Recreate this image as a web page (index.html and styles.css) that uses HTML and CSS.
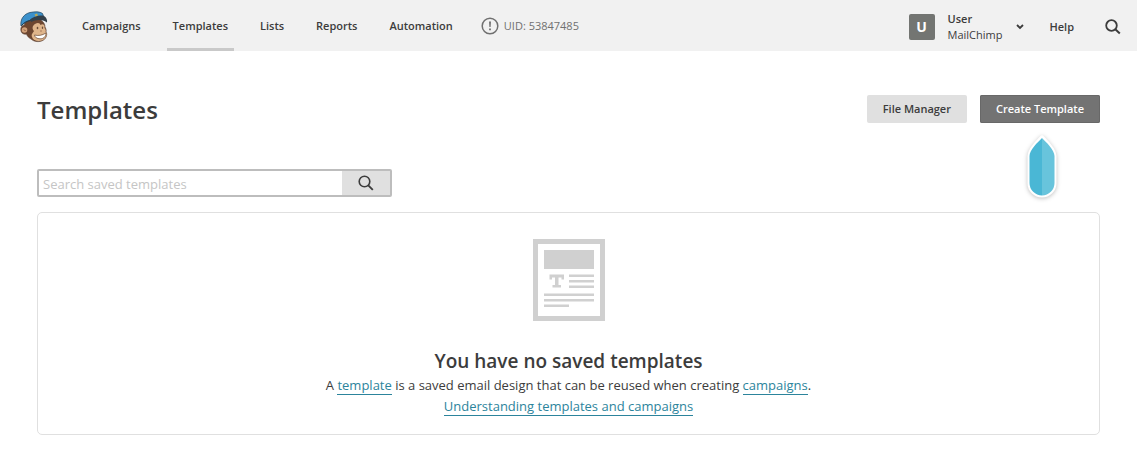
FILE: index.html
```html
<!DOCTYPE html>
<html lang="en">
<head>
<meta charset="utf-8">
<meta name="viewport" content="width=device-width, initial-scale=1">
<title>Templates</title>
<link rel="stylesheet" href="styles.css">
</head>
<body>
<header class="topbar">
  <a class="logo" href="#" aria-label="MailChimp home">
    <svg width="30" height="34" viewBox="0 0 30 34" aria-hidden="true">
      <path d="M5 11C7 8 13 7 18 8C22 9 25 12 25 16C26 18 26.500 19 26 21C27.500 23 26.500 27 23.500 29C20 31.500 14 31 11 28C9 27 7 25 6.500 23C3 24 0 21 1 17C1.500 15 3 14 4.500 14Z" fill="#6d4630" stroke="#5a4030" stroke-width=".6"/>
      <path d="M15 13C18 11 20 12 20.500 14C23 12 25 14 24.500 17C26 19 26 20 25.500 21C28 23 26 27 23 29C19 31 13 30 12 26C11 23 13 22 14 20C12 18 12 15 15 13Z" fill="#dfb58b"/>
      <circle cx="4.500" cy="19" r="2.800" fill="#d2a179"/>
      <path d="M4 18.500L5.500 20" stroke="#805338"/>
      <path d="M14.500 24C18 25 22 24.500 26 22C26 26 23 28 20 27.800C17 27.800 15 26.500 14.500 24Z" fill="#fff" stroke="#684631" stroke-width=".7"/>
      <ellipse cx="17.500" cy="17" rx=".8" ry="1.300" fill="#6c4d38"/>
      <ellipse cx="22.500" cy="16.800" rx=".7" ry="1.200" fill="#6c4d38"/>
      <path d="M20 20L22 20" stroke="#9b6f50" stroke-width=".8"/>
      <path d="M1 15C0 8 4 3 10 1.500C15 .5 20 .5 22.500 2.500L24.500 8C20 6.500 15 7 11 9C7 10 4 12 1 15Z" fill="#3b91cc" stroke="#284c66" stroke-width=".8"/>
      <path d="M10 8.500C13 5.500 20 3.500 24 5C26.500 6.500 27.500 9 27 11.500C22 8 16 8.500 11 11Z" fill="#34404a"/>
      <path d="M1.500 14.500C4 11.500 7 10 10.500 9.500" stroke="#243c4c" fill="none"/>
      <path d="M14.500 3.500L17 2.500L18 4.500L15.500 5.500Z" fill="#b9a854"/>
    </svg>
  </a>
  <nav class="nav" aria-label="Main">
    <a class="nav-link" href="#">Campaigns</a>
    <a class="nav-link active" href="#" aria-current="page">Templates</a>
    <a class="nav-link" href="#">Lists</a>
    <a class="nav-link" href="#">Reports</a>
    <a class="nav-link" href="#">Automation</a>
  </nav>
  <div class="uid">
    <svg width="18" height="18" viewBox="0 0 18 18" aria-hidden="true"><circle cx="9" cy="9" r="7.800" fill="none" stroke="#707070" stroke-width="1.500"/><path d="M8 4.500h2l-.4 5.500h-1.200zM8.100 11.500h1.800v1.800h-1.800z" fill="#707070"/></svg>
    <span>UID: 53847485</span>
  </div>
  <div class="account-area">
    <button class="account" type="button">
      <span class="avatar">U</span>
      <span class="account-name"><strong>User</strong><span>MailChimp</span></span>
      <svg width="8" height="6" viewBox="0 0 8 6" aria-hidden="true"><path d="M1 1l3 3 3-3" fill="none" stroke="#3c3c3c" stroke-width="1.800"/></svg>
    </button>
    <a class="help" href="#">Help</a>
    <button class="icon-button" type="button" aria-label="Search">
      <svg width="16" height="16" viewBox="0 0 16 16" aria-hidden="true"><circle cx="6.500" cy="6.500" r="5.300" fill="none" stroke="#3c3c3c" stroke-width="1.800"/><path d="M10.300 10.300l4.500 4.200" stroke="#3c3c3c" stroke-width="2"/></svg>
    </button>
  </div>
</header>
<main class="page">
  <div class="heading">
    <h1 class="title">Templates</h1>
    <div class="actions">
      <button class="button" type="button">File Manager</button>
      <div class="create">
        <button class="button primary" type="button">Create Template</button>
        <svg class="pointer" width="38" height="70" viewBox="0 0 38 70" aria-hidden="true">
          <path d="M19 5C23 9 31 17 31 23V50A12 12 0 0 1 7 50V23C7 17 15 9 19 5Z" fill="#fff" stroke="#fff" stroke-width="5" stroke-linejoin="round"/>
          <path d="M19 5C15 9 6.500 17 6.500 23V50A12.500 12.500 0 0 0 19 62.500Z" fill="#4ab7d5"/>
          <path d="M19 5C23 9 31.500 17 31.500 23V50A12.500 12.500 0 0 1 19 62.500Z" fill="#68c4dc"/>
        </svg>
      </div>
    </div>
  </div>
  <form class="search">
    <input class="search-input" type="text" placeholder="Search saved templates" aria-label="Search saved templates">
    <button class="search-button" type="button" aria-label="Search templates">
      <svg width="16" height="16" viewBox="0 0 16 16" aria-hidden="true"><circle cx="6.500" cy="6.500" r="5.300" fill="none" stroke="#3c3c3c" stroke-width="1.600"/><path d="M10.300 10.300l4.500 4.500" stroke="#3c3c3c" stroke-width="1.900"/></svg>
    </button>
  </form>
  <section class="empty">
    <svg width="72" height="82" viewBox="0 0 72 82" aria-hidden="true">
      <path d="M2.500 2.500h67v77h-67z" fill="#fff" stroke="#d0d0d0" stroke-width="5"/>
      <path d="M11 11h50v19H11zM36 35.500h25v2.500H36zM36 41h25v2.500H36zM36 46.500h25v2.500H36zM11 54.500h50v2.500H11zM11 60h50v2.500H11zM11 65.500h25v2.500H11z" fill="#d0d0d0"/>
      <path d="M16.500 35.500h14.500v5h-2.500v-2h-3v7.500h2.500v2.500h-8.500v-2.500h2.500v-7.500h-3v2h-2.500z" fill="#d0d0d0"/>
    </svg>
    <h2 class="empty-title">You have no saved templates</h2>
    <p class="empty-text">A <a class="link" href="#">template</a> is a saved email design that can be reused when creating <a class="link" href="#">campaigns</a>.<br><a class="link" href="#">Understanding templates and campaigns</a></p>
  </section>
</main>
</body>
</html>
```
FILE: styles.css
```css
* {
  box-sizing: border-box;
}

body {
  margin: 0;
  background: #fff;
  color: #3c3c3c;
  font-family: "Open Sans", sans-serif;
  font-size: 11px;
}

button,
input {
  font: inherit;
  color: inherit;
}

button {
  border: 0;
  padding: 0;
  background: none;
  cursor: pointer;
}

svg {
  display: block;
  flex: none;
}

.topbar {
  display: flex;
  align-items: stretch;
  min-height: 51px;
  padding: 0 16px 0 20px;
  background: #f1f1f1;
}

.logo {
  display: flex;
  align-items: center;
  padding-top: 4px;
}

.nav {
  display: flex;
  gap: 20px;
  margin-left: 26px;
}

.nav-link {
  display: flex;
  align-items: center;
  padding: 3px 6px 0;
  border-bottom: 3px solid transparent;
  color: #3c3c3c;
  font-weight: 600;
  text-decoration: none;
}

.nav-link.active {
  border-color: #c9c9c9;
}

.uid {
  display: flex;
  align-items: center;
  gap: 5px;
  margin-left: 22px;
  color: #707070;
}

.account-area {
  display: flex;
  align-items: center;
  margin-left: auto;
  padding-top: 2px;
}

.account {
  display: flex;
  align-items: center;
  text-align: left;
}

.avatar {
  width: 26px;
  margin-right: 13px;
  border-radius: 2px;
  background: #737572;
  color: #fff;
  font-size: 14px;
  font-weight: 700;
  line-height: 26px;
  text-align: center;
}

.account-name {
  display: flex;
  flex-direction: column;
  margin-right: 14px;
  line-height: 16px;
}

.account-name strong,
.help {
  font-weight: 600;
}

.help {
  margin: 0 31px 0 25px;
  color: #3c3c3c;
  text-decoration: none;
}

.page {
  padding: 39px 37px;
}

.heading {
  display: flex;
  justify-content: space-between;
  align-items: flex-start;
}

.title {
  margin: 0;
  font-size: 24px;
  font-weight: 600;
  line-height: 40px;
}

.actions {
  display: flex;
  gap: 13px;
  padding-top: 5px;
}

.create {
  position: relative;
}

.button {
  padding: 0 16px;
  border-radius: 2px;
  background: #e0e0e0;
  font-weight: 600;
  line-height: 28px;
}

.primary {
  background: #737373;
  box-shadow: inset 0 0 0 1px #686868;
  color: #fff;
}

.pointer {
  position: absolute;
  top: 38px;
  left: calc(50% - 17px);
  filter: drop-shadow(0 1px 2px rgb(0 0 0 / 25%));
}

.search {
  display: flex;
  width: 355px;
  max-width: 100%;
  height: 28px;
  margin: 39px 0 15px;
  border: 2px solid #bdbdbd;
  border-radius: 2px;
}

.search-input {
  flex: 1;
  min-width: 0;
  padding: 2px 4px 0;
  border: 0;
  background: #fff;
  font-size: 13px;
}

.search-input::placeholder {
  color: #c5c5c5;
}

.search-button {
  display: flex;
  align-items: center;
  justify-content: center;
  width: 48px;
  background: #e0e0e0;
}

.empty {
  display: flex;
  flex-direction: column;
  align-items: center;
  padding: 26px 20px 17px;
  border: 1px solid #e0e0e0;
  border-radius: 5px;
  text-align: center;
}

.empty-title {
  margin: 26px 0 0;
  font-size: 19px;
  font-weight: 600;
  line-height: 28px;
}

.empty-text {
  margin: 0;
  font-size: 13px;
  line-height: 21px;
}

.link {
  border-bottom: 1px solid #2c849c;
  color: #2c849c;
  text-decoration: none;
}
```
